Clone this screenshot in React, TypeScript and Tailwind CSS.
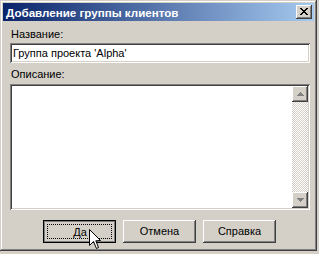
import React from "react";

const raised =
  "shadow-[inset_-1px_-1px_#404040,inset_1px_1px_#ffffff,inset_-2px_-2px_#808080,inset_2px_2px_#d4d0c8]";
const sunken =
  "shadow-[inset_1px_1px_#808080,inset_-1px_-1px_#ffffff,inset_2px_2px_#404040,inset_-2px_-2px_#d4d0c8]";

function ArrowUp() {
  return (
    <svg width="7" height="4" viewBox="0 0 7 4" className="block">
      <path d="M3 0h1v1h1v1h1v1h1v1H0V3h1V2h1V1h1z" fill="#808080" />
    </svg>
  );
}
function ArrowDown() {
  return (
    <svg width="7" height="4" viewBox="0 0 7 4" className="block">
      <path d="M0 0h7v1H6v1H5v1H4v1H3V3H2V2H1V1H0z" fill="#808080" />
    </svg>
  );
}

export default function App() {
  return (
    <div
      className="w-[319px] h-[254px] bg-[#d4d0c8] relative overflow-hidden"
      style={{ fontFamily: '"Liberation Sans", Arial, sans-serif' }}
    >
      <div
        className={`w-[317px] h-[251px] bg-[#d4d0c8] p-[3px] flex flex-col shadow-[inset_-1px_-1px_#404040,inset_1px_1px_#d4d0c8,inset_-2px_-2px_#808080,inset_2px_2px_#ffffff]`}
      >
        {/* title bar */}
        <div className="h-[18px] flex items-center justify-between pl-[3px] pr-[2px] bg-[linear-gradient(to_right,#0a246a,#a6caf0)]">
          <span className="text-white font-bold text-[11.6px] leading-[13px]">
            Добавление группы клиентов
          </span>
          <div className={`w-[16px] h-[14px] bg-[#d4d0c8] flex items-center justify-center ${raised}`}>
            <svg width="8" height="7" viewBox="0 0 8 7" className="block -mt-[1px]">
              <path
                d="M0 0h2v1h1v1h2V1h1V0h2v1H7v1H6v1H5v1h1v1h1v1h1v1H6V6H5V5H3v1H2v1H0V6h1V5h1V4h1V3H2V2H1V1H0z"
                fill="#000"
              />
            </svg>
          </div>
        </div>

        {/* content */}
        <div className="flex flex-col pl-[7px] pr-[4px] pt-[7px] text-[11px] text-black">
          <div className="h-[13px] leading-[13px] pl-[1px]">Название:</div>
          <div className={`mt-[2px] h-[20px] bg-white ${sunken} flex items-center pl-[3px] leading-[13px]`}>
            Группа проекта 'Alpha'
          </div>
          <div className="mt-[5px] h-[13px] leading-[13px] pl-[1px]">Описание:</div>
          <div className={`mt-[3px] h-[126px] bg-white ${sunken} p-[2px] flex justify-end`}>
            <div className="w-[16px] h-full flex flex-col bg-[repeating-conic-gradient(#d4d0c8_0_25%,#ffffff_0_50%)] bg-[length:2px_2px]">
              <div className={`h-[16px] bg-[#d4d0c8] ${raised} flex items-center justify-center`}>
                <ArrowUp />
              </div>
              <div className="flex-1" />
              <div className={`h-[16px] bg-[#d4d0c8] ${raised} flex items-center justify-center`}>
                <ArrowDown />
              </div>
            </div>
          </div>

          <div className="mt-[10px] flex gap-[7px] pl-[33px]">
            <div className="w-[73px] h-[23px] border border-black bg-[#d4d0c8] relative">
              <div className="absolute inset-0 border border-[#808080]" />
              <div className="absolute left-[3px] top-[3px] right-[3px] bottom-[3px] border border-dotted border-black" />
              <div className="h-full flex items-center justify-center pl-[1px] pt-[1px] leading-[13px]">
                Да
              </div>
            </div>
            <div className={`w-[73px] h-[23px] bg-[#d4d0c8] ${raised} flex items-center justify-center leading-[13px]`}>
              Отмена
            </div>
            <div className={`w-[73px] h-[23px] bg-[#d4d0c8] ${raised} flex items-center justify-center leading-[13px]`}>
              Справка
            </div>
          </div>
        </div>
      </div>

      {/* mouse cursor */}
      <svg
        width="13"
        height="21"
        viewBox="0 0 13 21"
        className="absolute left-[89px] top-[229px]"
      >
        <path
          d="M0.5 0.5 L0.5 16.5 L4.5 12.5 L7.5 19.5 L9.5 18.5 L6.8 11.8 L11.5 11.5 Z"
          fill="#fff"
          stroke="#000"
          strokeWidth="1"
          strokeLinejoin="miter"
        />
      </svg>
    </div>
  );
}
